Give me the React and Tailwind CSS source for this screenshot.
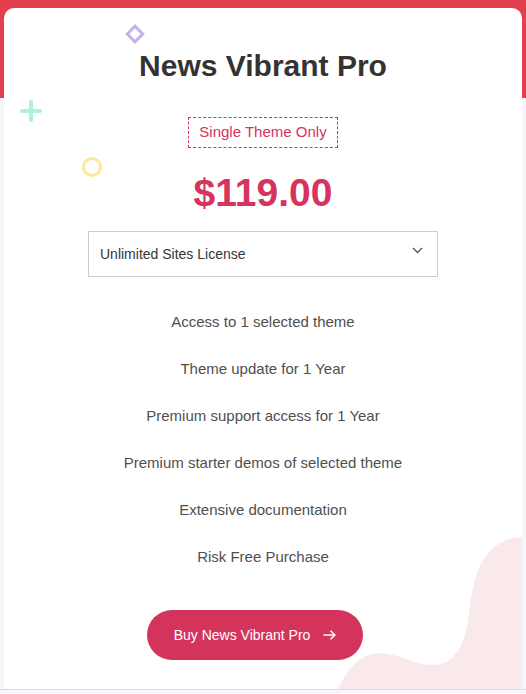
import React from "react";

const features = [
  "Access to 1 selected theme",
  "Theme update for 1 Year",
  "Premium support access for 1 Year",
  "Premium starter demos of selected theme",
  "Extensive documentation",
  "Risk Free Purchase",
];

const PricingCard = () => {
  return (
    <div className="relative h-[681px] bg-white rounded-t-[10px] overflow-hidden">
      {/* decorative shapes */}
      <div className="absolute left-[124px] top-[19px] w-[14px] h-[14px] border-[3px] border-[#c4b3ea] rotate-45"></div>
      <div className="absolute left-[16px] top-[92px] w-[22px] h-[22px]">
        <div className="absolute left-0 top-[9px] w-[22px] h-[4px] rounded-full bg-[#b6ece6]"></div>
        <div className="absolute left-[9px] top-0 w-[4px] h-[22px] rounded-full bg-[#b6ece6]"></div>
      </div>
      <div className="absolute left-[78px] top-[149px] w-[20px] h-[20px] rounded-full border-[3px] border-[#fde89b]"></div>
      <svg
        className="absolute right-0 bottom-0"
        width="190"
        height="160"
        viewBox="0 0 190 160"
      >
        <path
          d="M6 160 C16 138 30 124 48 124 C66 124 82 136 100 136 C122 136 132 118 136 92 C140 62 142 40 158 22 C168 12 180 8 190 8 L190 160 Z"
          fill="#f9e9ea"
        />
      </svg>

      <div className="relative flex flex-col items-center pt-[40px] font-['Liberation_Sans',Arial,sans-serif]">
        <h1 className="text-[30px] leading-[36px] font-bold text-[#333333]">News Vibrant Pro</h1>

        <div className="mt-[33px] px-[10px] h-[31px] flex items-center border border-dashed border-[#d6335e] text-[15px] text-[#d6335e]">
          Single Theme Only
        </div>

        <div className="mt-[21px] text-[39px] leading-[48px] font-bold text-[#d6335e]">$119.00</div>

        <div className="mt-[14px] w-[350px] h-[46px] border border-[#cccccc] flex items-center justify-between pl-[11px] pr-[14px]">
          <span className="text-[14px] text-[#32373c]">Unlimited Sites License</span>
          <svg width="11" height="7" viewBox="0 0 11 7" className="-mt-[8px]">
            <polyline points="1,1 5.5,5.5 10,1" fill="none" stroke="#4a5563" strokeWidth="1.3" />
          </svg>
        </div>

        <ul className="mt-[21px] flex flex-col items-center">
          {features.map((f) => (
            <li key={f} className="text-[15px] leading-[47px] text-[#4f4f4f]">
              {f}
            </li>
          ))}
        </ul>

        <button className="mt-[30px] mr-[16px] w-[216px] h-[50px] rounded-full bg-[#d4345c] text-white text-[14px] flex items-center justify-center gap-[13px]">
          <span>Buy News Vibrant Pro</span>
          <svg width="13" height="10" viewBox="0 0 13 10">
            <path d="M0.5 5 H12 M7.5 0.8 L12 5 L7.5 9.2" fill="none" stroke="white" strokeWidth="1.5" />
          </svg>
        </button>
      </div>
    </div>
  );
};

export default function App() {
  return (
    <div className="w-full min-h-[694px] bg-[linear-gradient(to_bottom,#e3404f_0,#e3404f_98px,#f5f6fa_98px)]">
      <div className="px-[4px] pt-[8px]">
        <PricingCard />
      </div>
      <div className="border-t border-[#dddddd] h-[5px] bg-[#f5f6fa]"></div>
    </div>
  );
}
